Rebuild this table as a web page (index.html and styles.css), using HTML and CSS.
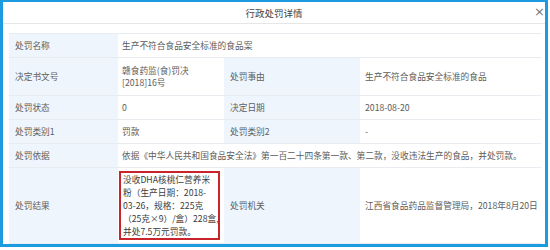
FILE: index.html
```html
<!DOCTYPE html>
<html lang="zh">
<head>
<meta charset="utf-8">
<title>行政处罚详情</title>
<link rel="stylesheet" href="styles.css">
</head>
<body>
<div class="dialog">
  <div class="dialog-head">
    <span class="dialog-title">行政处罚详情</span>
    <span class="dialog-close">×</span>
  </div>
  <div class="dialog-body">
    <table class="detail">
      <colgroup>
        <col class="c1"><col class="c2"><col class="c3"><col class="c4">
      </colgroup>
      <tr class="r-std">
        <th>处罚名称</th>
        <td colspan="3">生产不符合食品安全标准的食品案</td>
      </tr>
      <tr class="r-two">
        <th>决定书文号</th>
        <td>赣食药监(食)罚决<br>[2018]16号</td>
        <th>处罚事由</th>
        <td class="wide">生产不符合食品安全标准的食品</td>
      </tr>
      <tr class="r-std">
        <th>处罚状态</th>
        <td>0</td>
        <th>决定日期</th>
        <td class="wide">2018-08-20</td>
      </tr>
      <tr class="r-std">
        <th>处罚类别1</th>
        <td>罚款</td>
        <th>处罚类别2</th>
        <td class="wide">-</td>
      </tr>
      <tr class="r-std">
        <th>处罚依据</th>
        <td colspan="3">依据《中华人民共和国食品安全法》第一百二十四条第一款、第二款，没收违法生产的食品，并处罚款。</td>
      </tr>
      <tr class="r-big">
        <th>处罚结果</th>
        <td class="result-cell"><div class="result">没收DHA核桃仁营养米<br>粉（生产日期：2018-<br>03-26，规格：225克<br>（25克×9）/盒）228盒,<br>并处7.5万元罚款。</div></td>
        <th>处罚机关</th>
        <td class="wide">江西省食品药品监督管理局，2018年8月20日</td>
      </tr>
    </table>
  </div>
</div>
</body>
</html>
```

FILE: styles.css
```css
html, body {
  margin: 0;
  padding: 0;
  background: #ffffff;
}

body {
  font-family: "Noto Sans CJK SC", "Microsoft YaHei", sans-serif;
  font-size: 8.7px;
  color: #5c5c5c;
}

.dialog {
  width: 542px;
  height: 242px;
  border: 3px solid #1c9be0;
  border-top-width: 2px;
  background: #ffffff;
}

.dialog-head {
  height: 21px;
  border-bottom: 1px solid #e6e6e6;
  display: flex;
  align-items: center;
  justify-content: center;
  position: relative;
}

.dialog-title {
  font-size: 9.5px;
  color: #444;
}

.dialog-close {
  position: absolute;
  right: 0px;
  top: 3px;
  font-size: 13px;
  line-height: 14px;
  color: #777;
  font-family: "DejaVu Sans", sans-serif;
}

.dialog-body {
  padding: 9px 4px 0 6px;
}

.detail {
  width: 532px;
  border-collapse: collapse;
  table-layout: fixed;
  border-top: 1px solid #e8ecf0;
}

.c1 { width: 109px; }
.c2 { width: 106px; }
.c3 { width: 136px; }
.c4 { width: 181px; }

.detail th,
.detail td {
  border-bottom: 1px solid #e8ecf0;
  vertical-align: middle;
  text-align: left;
  font-weight: normal;
  line-height: 12px;
  white-space: nowrap;
}

.detail th {
  background: #eef5fc;
  padding: 0 0 0 6px;
  color: #606060;
}

.detail td {
  background: #ffffff;
  padding: 0 0 0 4px;
}

.detail td.wide {
  padding-left: 5px;
}

.r-std th, .r-std td { height: 23px; }
.r-two th, .r-two td { height: 37px; }
.r-big th, .r-big td { height: 75px; }

.detail td.result-cell {
  padding: 0 0 0 1px;
}

.result {
  width: 95px;
  border: 2px solid #c9232b;
  padding: 0 0 0 2px;
  line-height: 13px;
  color: #3c3c3c;
  white-space: nowrap;
  overflow: hidden;
}
```
